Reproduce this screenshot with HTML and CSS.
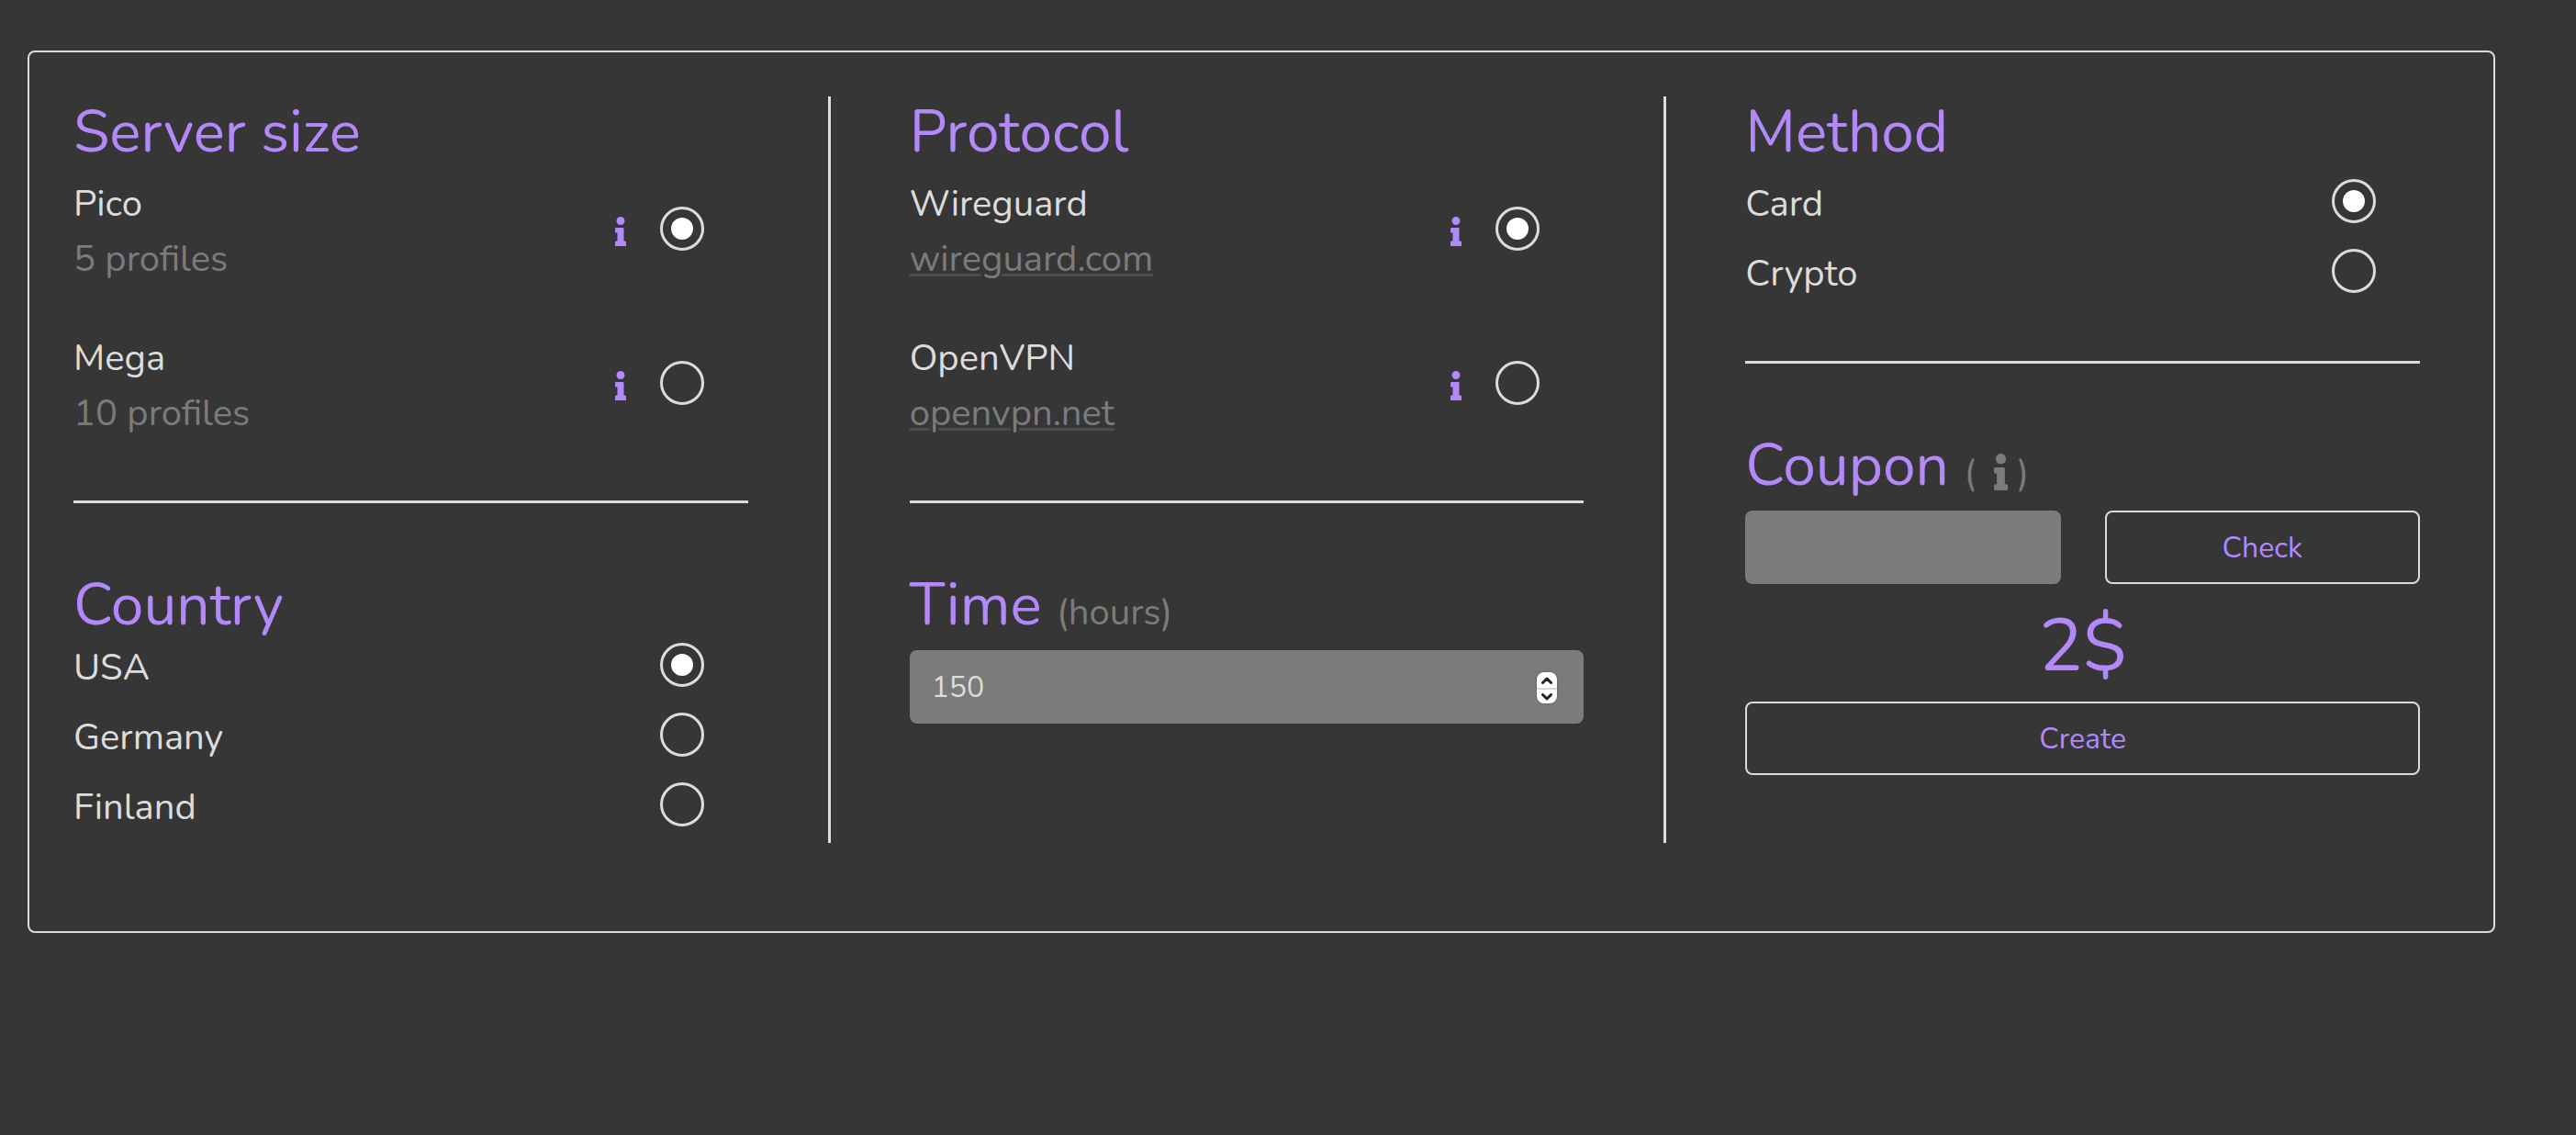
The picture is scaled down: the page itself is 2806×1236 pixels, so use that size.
FILE: index.html
```html
<!DOCTYPE html>
<html lang="en">
<head>
    <meta charset="UTF-8">
    <meta name="viewport" content="width=device-width, initial-scale=1.0">
    <title>Create VPN server</title>
    <link rel="stylesheet" href="styles.css">
</head>
<body>

    <!-- info icon, reused below -->
    <svg class="sprite" aria-hidden="true">
        <symbol id="info" viewBox="0 0 192 512">
            <path d="M20 424.229h20V279.771H20c-11.046 0-20-8.954-20-20V212c0-11.046 8.954-20 20-20h112c11.046 0 20 8.954 20 20v212.229h20c11.046 0 20 8.954 20 20V492c0 11.046-8.954 20-20 20H20c-11.046 0-20-8.954-20-20v-47.771c0-11.046 8.954-20 20-20zM96 0C56.235 0 24 32.235 24 72s32.235 72 72 72 72-32.235 72-72S135.764 0 96 0z"/>
        </symbol>
    </svg>

    <form class="container" onsubmit="return false">
        <div class="column">
            <h2>Server size</h2>
            <div class="options wide">
                <div class="option">
                    <label for="pico">Pico<br><span class="muted">5 profiles</span></label>
                    <svg class="info"><use href="#info"/></svg>
                    <input type="radio" name="size" id="pico" checked>
                </div>
                <div class="option">
                    <label for="mega">Mega<br><span class="muted">10 profiles</span></label>
                    <svg class="info"><use href="#info"/></svg>
                    <input type="radio" name="size" id="mega">
                </div>
            </div>
            <hr>
            <h2 class="tight">Country</h2>
            <div class="options">
                <div class="option">
                    <label for="usa">USA</label>
                    <input type="radio" name="country" id="usa" checked>
                </div>
                <div class="option">
                    <label for="germany">Germany</label>
                    <input type="radio" name="country" id="germany">
                </div>
                <div class="option">
                    <label for="finland">Finland</label>
                    <input type="radio" name="country" id="finland">
                </div>
            </div>
        </div>

        <div class="divider"></div>

        <div class="column">
            <h2>Protocol</h2>
            <div class="options wide">
                <div class="option">
                    <div class="text">
                        <label for="wireguard">Wireguard</label>
                        <a href="#">wireguard.com</a>
                    </div>
                    <svg class="info"><use href="#info"/></svg>
                    <input type="radio" name="protocol" id="wireguard" checked>
                </div>
                <div class="option">
                    <div class="text">
                        <label for="openvpn">OpenVPN</label>
                        <a href="#">openvpn.net</a>
                    </div>
                    <svg class="info"><use href="#info"/></svg>
                    <input type="radio" name="protocol" id="openvpn">
                </div>
            </div>
            <hr>
            <h2 class="field-title"><label for="time">Time <small>(hours)</small></label></h2>
            <div class="number">
                <input type="number" class="field" id="time" value="150">
                <div class="spinner">
                    <button type="button" aria-label="More" onclick="document.getElementById('time').stepUp()">
                        <svg viewBox="0 0 12 8"><path d="M1.5 6.5L6 2l4.5 4.5"/></svg>
                    </button>
                    <button type="button" aria-label="Less" onclick="document.getElementById('time').stepDown()">
                        <svg viewBox="0 0 12 8"><path d="M1.5 1.5L6 6l4.5-4.5"/></svg>
                    </button>
                </div>
            </div>
        </div>

        <div class="divider"></div>

        <div class="column">
            <h2>Method</h2>
            <div class="options">
                <div class="option">
                    <label for="card">Card</label>
                    <input type="radio" name="method" id="card" checked>
                </div>
                <div class="option">
                    <label for="crypto">Crypto</label>
                    <input type="radio" name="method" id="crypto">
                </div>
            </div>
            <hr>
            <h2 class="field-title"><label for="coupon">Coupon <small>( <svg class="info-big"><use href="#info"/></svg>)</small></label></h2>
            <div class="coupon">
                <input type="text" class="field" id="coupon">
                <button type="button" class="btn">Check</button>
            </div>
            <div class="price">2$</div>
            <button type="submit" class="btn">Create</button>
        </div>
    </form>

</body>
</html>
```
FILE: styles.css
```css
* {
    box-sizing: border-box;
}

body {
    margin: 0;
    background-color: #363636;
    color: #dcdcdc;
    font-family: Nunito, Lato, sans-serif;
    font-size: 40px;
    line-height: 60px;
}

.sprite {
    display: none;
}

.container {
    display: flex;
    margin: 55px 88px 0 30px;
    padding: 48px 80px 96px 48px;
    border: 2px solid #dcdcdc;
    border-radius: 8px;
}

.column {
    flex: 1;
    min-width: 0;
    padding: 3px 0 9px;
}

.divider {
    width: 3px;
    margin: 0 86px 0 87px;
    background-color: #dcdcdc;
}

h2 {
    margin: 0 0 12px;
    color: #b388f8;
    font-size: 64px;
    font-weight: 400;
    line-height: 72px;
}

h2.tight {
    margin-bottom: 2px;
}

h2.field-title {
    margin-bottom: 13px;
}

h2 small {
    color: #7b7b7b;
    font-size: 40px;
    line-height: 40px;
}

hr {
    height: 3px;
    margin: 65px 0 75px;
    border: none;
    background-color: #dcdcdc;
}

.options {
    display: flex;
    flex-direction: column;
    gap: 16px;
    padding-right: 48px;
}

.options.wide {
    gap: 48px;
}

.option {
    display: flex;
    align-items: center;
}

.option > label,
.text {
    flex: 1;
}

.text label,
.text a {
    display: table;
}

.muted,
.text a {
    color: #7b7b7b;
}

.text a {
    text-decoration-color: #4b4b4b;
    text-decoration-thickness: 3px;
    text-underline-offset: 3px;
}

.info {
    width: 12px;
    height: 32px;
    margin-right: 37px;
    fill: #b388f8;
}

.info-big {
    width: 15px;
    height: 40px;
    margin: 0 10px;
    vertical-align: -6px;
    fill: #7b7b7b;
}

input[type="radio"] {
    appearance: none;
    display: grid;
    place-items: center;
    width: 48px;
    height: 48px;
    margin: 0 0 6px;
    border: 3px solid #dcdcdc;
    border-radius: 50%;
    cursor: pointer;
}

input[type="radio"]:checked::before {
    content: "";
    width: 24px;
    height: 24px;
    border-radius: 50%;
    background-color: #fff;
}

.field {
    display: block;
    width: 100%;
    height: 80px;
    padding: 0 24px;
    border: none;
    border-radius: 8px;
    background-color: #7b7b7b;
    color: #dcdcdc;
    font-family: inherit;
    font-size: 32px;
    appearance: textfield;
}

.field::-webkit-inner-spin-button {
    display: none;
}

.number {
    position: relative;
}

/* stepper over the right end of the number field */
.spinner {
    position: absolute;
    top: 24px;
    right: 29px;
    width: 22px;
    height: 34px;
    border-radius: 8px;
    overflow: hidden;
    box-shadow: 0 0 2px rgba(0, 0, 0, 0.4);
}

.spinner button {
    display: flex;
    align-items: center;
    justify-content: center;
    width: 100%;
    height: 50%;
    padding: 0;
    border: none;
    background-color: #fff;
}

.spinner button + button {
    border-top: 2px solid #d8d8d8;
}

.spinner svg {
    width: 12px;
    height: 8px;
    fill: none;
    stroke: #222;
    stroke-width: 3;
    stroke-linecap: round;
    stroke-linejoin: round;
}

.coupon {
    display: grid;
    grid-template-columns: 1fr 1fr;
    gap: 48px;
}

.btn {
    display: block;
    width: 100%;
    height: 80px;
    border: 2px solid #dcdcdc;
    border-radius: 8px;
    background: none;
    color: #b388f8;
    font-family: inherit;
    font-size: 32px;
    cursor: pointer;
}

.price {
    padding-top: 8px;
    color: #b388f8;
    font-size: 80px;
    line-height: 120px;
    text-align: center;
}
```
